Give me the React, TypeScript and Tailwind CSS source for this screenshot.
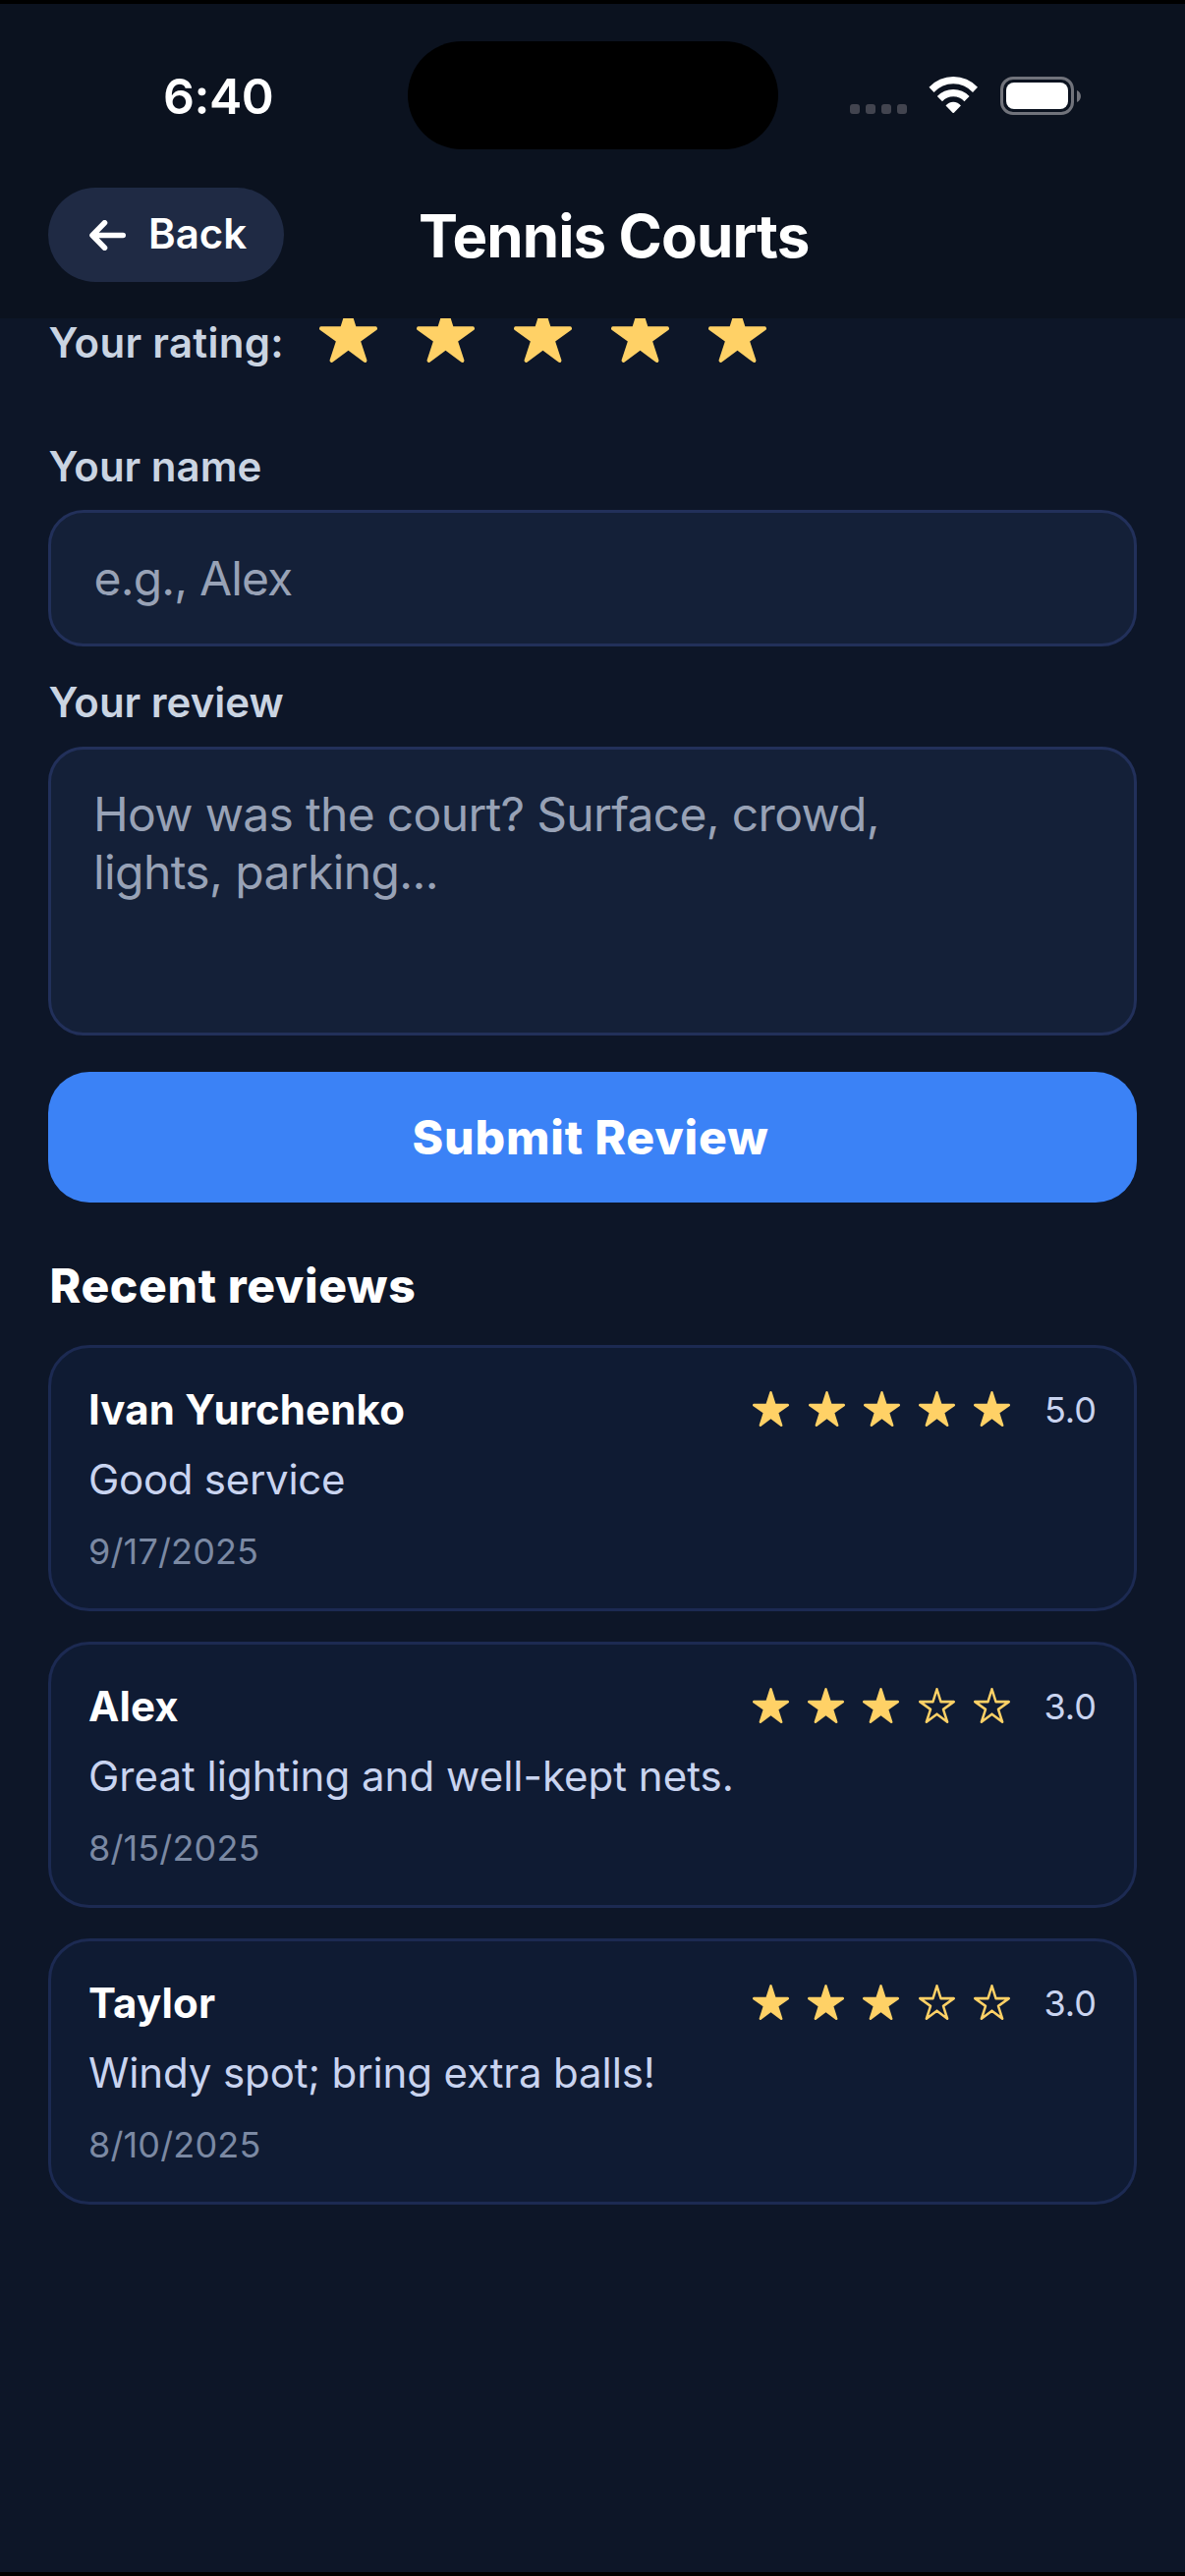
const STAR_PATH =
  "M394 480a16 16 0 01-9.39-3L256 383.76 127.39 477a16 16 0 01-24.55-18.08L153 310.35 23 221.2a16 16 0 019-29.2h160.38l48.4-148.95a16 16 0 0130.44 0l48.4 149H480a16 16 0 019.05 29.2L359 310.35l50.13 148.53A16 16 0 01394 480z";

function Star({ filled = true, className }: { filled?: boolean; className: string }) {
  return (
    <svg viewBox="16 32 480 448" preserveAspectRatio="none" className={className} aria-hidden="true">
      {filled ? (
        <path d={STAR_PATH} fill="#ffd166" />
      ) : (
        <path
          d="M480 208H308L256 48l-52 160H32l140 96-54 160 138-100 138 100-54-160z"
          fill="none"
          stroke="#ffd166"
          strokeWidth="32"
          strokeLinejoin="round"
        />
      )}
    </svg>
  );
}

function StatusBar() {
  return (
    <div className="flex h-[186px] items-center">
      <div className="w-[415px] pt-0.5 pl-[166px] text-[50px] leading-[60px] font-semibold tracking-[-0.5px]">6:40</div>
      <div className="h-[110px] w-[377px] rounded-full bg-black" />
      <div className="ml-[73px] flex items-center">
        <div className="flex gap-1.5 pt-7">
          {[0, 1, 2, 3].map((dot) => (
            <span key={dot} className="size-2.5 rounded-[3px] bg-[#42444f]" />
          ))}
        </div>
        <svg viewBox="0 0 51 38" className="ml-[22px] h-[38px] w-[51px] fill-white" aria-hidden="true">
          <path d="M.5 10.8A33.8 33.8 0 0 1 50 10.8L45 16A26.6 26.6 0 0 0 5.5 16Z" />
          <path d="M8.8 20A22.7 22.7 0 0 1 41.6 20L36.4 25.3A15 15 0 0 0 14 25.3Z" />
          <path d="M17.5 29.5A9.8 9.8 0 0 1 32.9 29.5L25.9 36.8Q25.2 37.4 24.5 36.8Z" />
        </svg>
        <div className="ml-[22px] flex items-center gap-[3px] pt-px">
          <div className="h-[39px] w-[75px] rounded-[13px] border-[3px] border-[#71737b] p-[3px]">
            <div className="h-full rounded-[8px] bg-white" />
          </div>
          <svg viewBox="0 0 4 12" className="h-3 w-1 fill-[#71737b]" aria-hidden="true">
            <path d="M0 0C5.3 2 5.3 10 0 12Z" />
          </svg>
        </div>
      </div>
    </div>
  );
}

type Review = { name: string; rating: number; text: string; textClass: string; date: string };

const REVIEWS: Review[] = [
  { name: "Ivan Yurchenko", rating: 5, text: "Good service", textClass: "tracking-[-0.28px]", date: "9/17/2025" },
  { name: "Alex", rating: 3, text: "Great lighting and well-kept nets.", textClass: "tracking-[0.02px]", date: "8/15/2025" },
  { name: "Taylor", rating: 3, text: "Windy spot; bring extra balls!", textClass: "tracking-[-0.12px]", date: "8/10/2025" },
];

function ReviewCard({ review }: { review: Review }) {
  return (
    <article className="h-[271px] rounded-[42px] border-[3px] border-[#1c2a52] bg-[#0f1b33] px-[38px] pt-[38px]">
      <div className="flex h-[50px] items-center justify-between">
        <h3 className="text-[42px] leading-[50px] font-bold tracking-[0.15px]">{review.name}</h3>
        <div className="flex items-center">
          <div className="mr-[34.5px] flex gap-[19.3px] pb-[2px]">
            {[1, 2, 3, 4, 5].map((n) => (
              <Star key={n} filled={n <= review.rating} className="h-9 w-[37px]" />
            ))}
          </div>
          <span className="text-[36px] leading-[44px] text-[#c9d4f0]">{review.rating.toFixed(1)}</span>
        </div>
      </div>
      <p className={`mt-4 text-[42px] leading-[60px] text-[#c9d4f0] ${review.textClass}`}>{review.text}</p>
      <p className="mt-[21px] text-[36px] leading-[44px] tracking-[0.15px] text-[#7b89a3]">{review.date}</p>
    </article>
  );
}

export default function App() {
  return (
    <div className="h-[2622px] w-[1206px] overflow-hidden border-y-4 border-black bg-[#0d1628] font-[Inter,sans-serif] text-white">
      <header className="h-[320px] bg-[#0b121f]">
        <StatusBar />
        <div className="flex items-center pt-px pl-[49px]">
          <button className="flex h-24 w-60 items-center rounded-full bg-[#1f2a44] pl-[42px]">
            <svg viewBox="0 0 37 31" className="h-[31px] w-[37px]" aria-hidden="true">
              <path
                d="M15.5 2.8L3 15.5L15.5 28.2M3.5 15.5H34.2"
                fill="none"
                stroke="white"
                strokeWidth="5.6"
                strokeLinecap="round"
                strokeLinejoin="round"
              />
            </svg>
            <span className="ml-[23px] pb-0.5 text-[42px] leading-[50px] font-semibold">Back</span>
          </button>
          <h1 className="ml-[137px] pt-0.5 text-[60px] leading-[72px] font-bold tracking-[-0.9px]">Tennis Courts</h1>
        </div>
      </header>

      <main className="h-[2290px] overflow-hidden px-[49px]">
        <div className="-mt-3 flex items-start text-[#cad4e2]">
          <span className="mt-[13px] w-[276px] pl-[0.5px] text-[42px] leading-[48px] font-semibold tracking-[0.3px]">Your rating:</span>
          <div className="flex gap-10">
            {[1, 2, 3, 4, 5].map((n) => (
              <Star key={n} className="h-[57px] w-[59px]" />
            ))}
          </div>
        </div>

        <div className="mt-[77px] pl-[0.5px] text-[42px] leading-[50px] font-semibold text-[#cad4e2]">Your name</div>
        <div className="mt-[19px] flex h-[139px] items-center rounded-[36px] border-[3px] border-[#22305a] bg-[#142038] pl-[43.5px] text-[48px] leading-[58px] tracking-[-0.83px] text-[#98a2b6]">
          e.g., Alex
        </div>

        <div className="mt-8 pl-[0.5px] text-[42px] leading-[50px] font-semibold text-[#cad4e2]">Your review</div>
        <div className="mt-5 h-[294px] rounded-[36px] border-[3px] border-[#22305a] bg-[#142038] pt-[37px] pl-[43px] text-[48px] leading-[58.5px] text-[#98a2b6]">
          <div className="tracking-[-0.68px]">How was the court? Surface, crowd,</div>
          <div className="tracking-[-0.6px]">lights, parking...</div>
        </div>

        <button className="mt-[37px] flex h-[133px] w-full items-center justify-center rounded-[42px] bg-[#3b82f6] pr-1 text-[48px] leading-[60px] font-extrabold tracking-[0.85px]">
          Submit Review
        </button>

        <h2 className="mt-[55px] pl-[1.5px] text-[48px] leading-[60px] font-extrabold tracking-[0.63px]">Recent reviews</h2>
        <div className="mt-[30px] flex flex-col gap-[31px]">
          {REVIEWS.map((review) => (
            <ReviewCard key={review.date} review={review} />
          ))}
        </div>
      </main>
    </div>
  );
}
